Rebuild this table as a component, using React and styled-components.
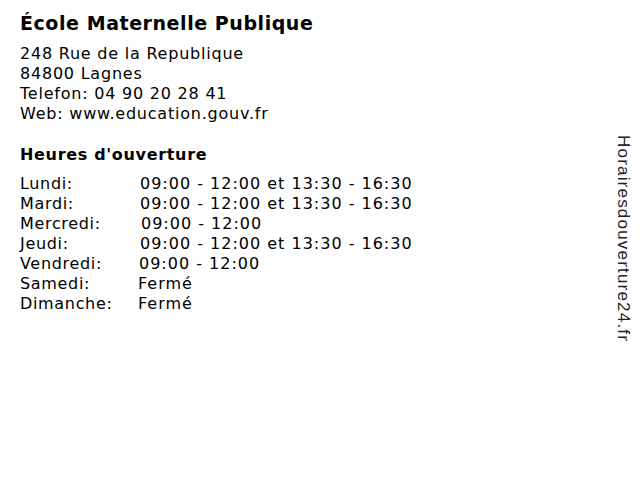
import React from "react";
import styled, { createGlobalStyle } from "styled-components";

const Global = createGlobalStyle`
  html, body { margin: 0; padding: 0; background: #fff; }
  body { width: 640px; height: 480px; overflow: hidden; }
`;

const Page = styled.div`
  display: flex;
  width: 640px;
  height: 480px;
  box-sizing: border-box;
  font-family: "DejaVu Sans", Verdana, sans-serif;
  color: #000;
`;

const Main = styled.div`
  flex: 1;
  padding: 9px 0 0 20px;
`;

const Title = styled.h1`
  margin: 0;
  font-size: 19px;
  font-weight: bold;
  line-height: 28px;
  letter-spacing: 0.56px;
`;

const Address = styled.div`
  margin-top: 7px;
  font-size: 16px;
  line-height: 20px;
  letter-spacing: 0.78px;
`;

const SubTitle = styled.h2`
  margin: 21px 0 0;
  font-size: 16px;
  font-weight: bold;
  line-height: 20px;
  letter-spacing: 0.67px;
`;

const Hours = styled.div`
  margin-top: 9px;
  display: flex;
  flex-direction: column;
`;

const Row = styled.div`
  display: flex;
  font-size: 16px;
  line-height: 20px;
`;

const Day = styled.span`
  width: ${(p) => p.$w}px;
  flex: none;
  letter-spacing: 0.67px;
`;

const Time = styled.span`
  letter-spacing: 1px;
  white-space: nowrap;
`;

const Side = styled.div`
  width: 34px;
  display: flex;
  justify-content: center;
  padding-top: 135px;
`;

const Vertical = styled.div`
  writing-mode: vertical-rl;
  font-family: "Liberation Sans", Arial, sans-serif;
  font-size: 17px;
  letter-spacing: 1.2px;
  color: #222;
  line-height: 19px;
`;

const rows = [
  ["Lundi:", "09:00 - 12:00 et 13:30 - 16:30", 120],
  ["Mardi:", "09:00 - 12:00 et 13:30 - 16:30", 120],
  ["Mercredi:", "09:00 - 12:00", 121],
  ["Jeudi:", "09:00 - 12:00 et 13:30 - 16:30", 120],
  ["Vendredi:", "09:00 - 12:00", 119],
  ["Samedi:", "Fermé", 118],
  ["Dimanche:", "Fermé", 118],
];

export default function App() {
  return (
    <>
      <Global />
      <Page>
        <Main>
          <Title>École Maternelle Publique</Title>
          <Address>
            248 Rue de la Republique
            <br />
            84800 Lagnes
            <br />
            Telefon: 04 90 20 28 41
            <br />
            Web: www.education.gouv.fr
          </Address>
          <SubTitle>Heures d'ouverture</SubTitle>
          <Hours>
            {rows.map(([d, t, w]) => (
              <Row key={d}>
                <Day $w={w}>{d}</Day>
                <Time>{t}</Time>
              </Row>
            ))}
          </Hours>
        </Main>
        <Side>
          <Vertical>Horairesdouverture24.fr</Vertical>
        </Side>
      </Page>
    </>
  );
}
